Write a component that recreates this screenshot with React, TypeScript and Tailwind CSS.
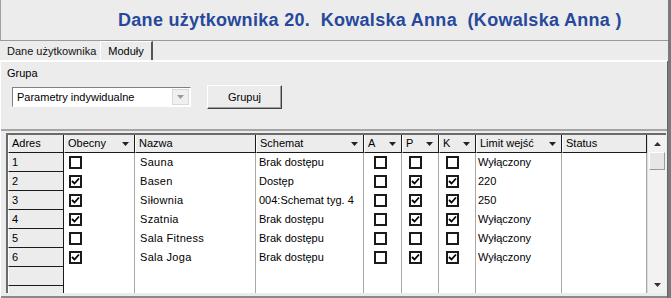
import React from 'react';

type Row = {
  adres: string;
  obecny: boolean;
  nazwa: string;
  schemat: string;
  a: boolean;
  p: boolean;
  k: boolean;
  limit: string;
};

const rows: Row[] = [
  { adres: '1', obecny: false, nazwa: 'Sauna', schemat: 'Brak dostępu', a: false, p: false, k: false, limit: 'Wyłączony' },
  { adres: '2', obecny: true, nazwa: 'Basen', schemat: 'Dostęp', a: false, p: true, k: true, limit: '220' },
  { adres: '3', obecny: true, nazwa: 'Siłownia', schemat: '004:Schemat tyg. 4', a: false, p: true, k: true, limit: '250' },
  { adres: '4', obecny: true, nazwa: 'Szatnia', schemat: 'Brak dostępu', a: false, p: true, k: true, limit: 'Wyłączony' },
  { adres: '5', obecny: false, nazwa: 'Sala Fitness', schemat: 'Brak dostępu', a: false, p: false, k: false, limit: 'Wyłączony' },
  { adres: '6', obecny: true, nazwa: 'Sala Joga', schemat: 'Brak dostępu', a: false, p: true, k: true, limit: 'Wyłączony' },
];

const Check = ({ checked }: { checked: boolean }) => (
  <div className="w-[13px] h-[13px] bg-white border-2 border-[#1a1a1a] flex items-center justify-center">
    {checked && (
      <svg width="9" height="9" viewBox="0 0 9 9">
        <path d="M1 4 L3.5 6.5 L8 1.5" stroke="#000" strokeWidth="1.8" fill="none" />
      </svg>
    )}
  </div>
);

const Arrow = () => (
  <svg width="7" height="4" viewBox="0 0 7 4" className="shrink-0">
    <path d="M0 0 H7 L3.5 4 Z" fill="#222" />
  </svg>
);

const HeadCell = ({ label, w, arrow }: { label: string; w: string; arrow?: boolean }) => (
  <div className={`${w} h-full flex items-center justify-between pl-[3px] pr-[5px] border-r border-b border-[#1a1a1a] border-l border-l-white`}>
    <span>{label}</span>
    {arrow && <Arrow />}
  </div>
);

export default function App() {
  return (
    <div
      className="w-[671px] h-[298px] bg-[#ececec] overflow-hidden text-[11px] text-black flex flex-col border-r-[3px] border-r-[#7a7a7a]"
      style={{ fontFamily: '"Liberation Sans", Arial, sans-serif' }}
    >
      {/* title */}
      <div className="h-[41px] shrink-0 flex items-center pl-[117px] border-l border-l-[#a0a0a0] border-b border-b-[#9a9a9a]">
        <span className="text-[18px] font-bold text-[#27489b] tracking-[0.3px] whitespace-pre">
          {'Dane użytkownika 20.  Kowalska Anna  (Kowalska Anna )'}
        </span>
      </div>

      {/* tabs */}
      <div className="h-[20px] shrink-0 flex items-end pl-[3px] border-b border-b-white">
        <div className="h-[17px] px-[4px] flex items-center text-[#111]">Dane użytkownika</div>
        <div className="h-[19px] px-[7px] flex items-center border-t border-l border-white border-r-2 border-r-[#555] bg-[#ececec]">
          Moduły
        </div>
      </div>

      {/* panel */}
      <div className="flex-1 flex flex-col border-l border-l-white border-r border-r-[#666]">
        <div className="h-[70px] shrink-0 border-t border-t-white border-b-2 border-b-[#a5a5a5] pl-[6px] pt-[5px]">
          <div className="leading-[13px]">Grupa</div>
          <div className="flex items-center mt-[5px]">
            <div className="w-[179px] h-[20px] ml-[5px] bg-white border border-t-[#808080] border-l-[#808080] border-b-white border-r-white flex items-center justify-between">
              <span className="pl-[4px]">Parametry indywidualne</span>
              <div className="w-[17px] h-[16px] mr-[1px] bg-[#f0f0f0] border border-[#d8d8d8] flex items-center justify-center">
                <svg width="7" height="4" viewBox="0 0 7 4">
                  <path d="M0 0 H7 L3.5 4 Z" fill="#9a9a9a" />
                </svg>
              </div>
            </div>
            <div className="ml-[16px] w-[75px] h-[24px] flex items-center justify-center border border-t-white border-l-white border-r-[#404040] border-b-[#404040] shadow-[inset_-1px_-1px_0_#a0a0a0]">
              Grupuj
            </div>
          </div>
        </div>

        {/* grid */}
        <div className="mt-[2px] ml-[5px] mr-[1px] h-[160px] border-t-2 border-l-2 border-[#6a6a6a] bg-white flex overflow-hidden">
          <div className="flex-1 flex flex-col">
            <div className="h-[18px] shrink-0 flex bg-[#ececec]">
              <HeadCell label="Adres" w="w-[56px]" />
              <HeadCell label="Obecny" w="w-[71px]" arrow />
              <HeadCell label="Nazwa" w="w-[121px]" />
              <HeadCell label="Schemat" w="w-[108px]" arrow />
              <HeadCell label="A" w="w-[38px]" arrow />
              <HeadCell label="P" w="w-[37px]" arrow />
              <HeadCell label="K" w="w-[37px]" arrow />
              <HeadCell label="Limit wejść" w="w-[86px]" arrow />
              <HeadCell label="Status" w="w-[85px]" />
            </div>
            <div className="flex-1 flex flex-col">
              {[...rows, null, null].map((r, i) => (
                <div key={i} className="h-[19px] shrink-0 flex">
                  <div className="w-[56px] h-full bg-[#ececec] border-r border-b border-[#1a1a1a] border-l border-l-white pl-[3px] flex items-center">
                    {r?.adres}
                  </div>
                  <div className="w-[71px] h-full pl-[5px] flex items-center border-r border-[#a8a8a8]">
                    {r && <Check checked={r.obecny} />}
                  </div>
                  <div className="w-[121px] h-full pl-[5px] flex items-center tracking-[0.3px] border-r border-[#a8a8a8]">
                    {r?.nazwa}
                  </div>
                  <div className="w-[108px] h-full pl-[3px] flex items-center whitespace-nowrap overflow-hidden border-r border-[#a8a8a8]">
                    {r?.schemat}
                  </div>
                  <div className="w-[38px] h-full pl-[10px] flex items-center border-r border-[#a8a8a8]">
                    {r && <Check checked={r.a} />}
                  </div>
                  <div className="w-[37px] h-full pl-[7px] flex items-center border-r border-[#a8a8a8]">
                    {r && <Check checked={r.p} />}
                  </div>
                  <div className="w-[37px] h-full pl-[7px] flex items-center border-r border-[#a8a8a8]">
                    {r && <Check checked={r.k} />}
                  </div>
                  <div className="w-[86px] h-full pl-[2px] flex items-center border-r border-[#a8a8a8]">
                    {r?.limit}
                  </div>
                  <div className="w-[85px] h-full border-r border-[#a8a8a8]" />
                </div>
              ))}
            </div>
          </div>

          {/* scrollbar */}
          <div className="w-[19px] h-full bg-[#f2f2f2] border-l border-[#dcdcdc] flex flex-col items-center">
            <div className="h-[17px] w-full flex items-center justify-center">
              <svg width="7" height="4" viewBox="0 0 7 4">
                <path d="M0 4 H7 L3.5 0 Z" fill="#333" />
              </svg>
            </div>
            <div className="w-[16px] h-[18px] bg-[#e6e6e6] border border-t-white border-l-white border-r-[#9a9a9a] border-b-[#9a9a9a]" />
            <div className="flex-1" />
            <div className="h-[17px] w-full flex items-center justify-center">
              <svg width="7" height="4" viewBox="0 0 7 4">
                <path d="M0 0 H7 L3.5 4 Z" fill="#333" />
              </svg>
            </div>
          </div>
        </div>
        <div className="flex-1 border-b-2 border-b-[#8a8a8a]" />
      </div>
    </div>
  );
}
